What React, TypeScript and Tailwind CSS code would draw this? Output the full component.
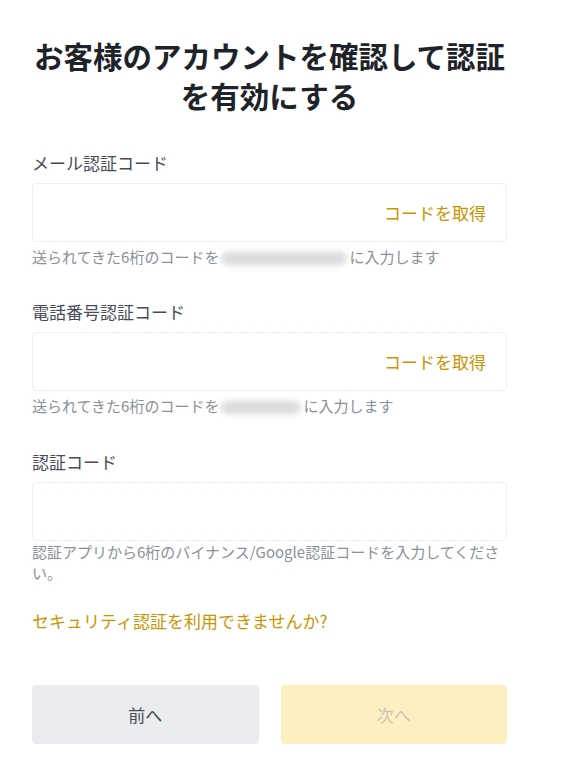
import React from "react";

const font = { fontFamily: '"Noto Sans CJK JP", "Noto Sans", sans-serif' };

function Blur({ w }: { w: number }) {
  return (
    <span
      className="inline-block h-[13px] align-middle rounded-full bg-[#d9dadc] blur-[3px] mx-[2px]"
      style={{ width: w }}
    />
  );
}

function Field({
  label,
  action,
  helper,
  helperGap,
}: {
  label: string;
  action?: boolean;
  helper: React.ReactNode;
  helperGap: string;
}) {
  return (
    <div className="flex flex-col">
      <div className="text-[17px] leading-[24px] text-[#474d57]">{label}</div>
      <div className="mt-[8px] h-[59px] rounded-[4px] border border-[#eeeff1] flex items-center justify-end pr-[20px]">
        {action && (
          <span className="text-[17px] text-[#c99400]">コードを取得</span>
        )}
      </div>
      <div className={`${helperGap} text-[15px] leading-[21px] text-[#8a9099]`}>{helper}</div>
    </div>
  );
}

export default function App() {
  return (
    <div className="min-h-[768px] w-[568px] bg-white" style={font}>
      <div className="w-[475px] ml-[32px] pt-[35px] flex flex-col">
        <h1 className="text-center text-[29.5px] leading-[40px] font-bold text-[#1e2329] whitespace-nowrap">
          お客様のアカウントを確認して認証
          <br />
          を有効にする
        </h1>
        <div className="mt-[36px]">
          <Field
            label="メール認証コード"
            action
            helperGap="mt-[4px]"
            helper={
              <>
                送られてきた6桁のコードを
                <Blur w={126} />
                に入力します
              </>
            }
          />
        </div>
        <div className="mt-[33px]">
          <Field
            label="電話番号認証コード"
            action
            helperGap="mt-[4px]"
            helper={
              <>
                送られてきた6桁のコードを
                <Blur w={80} />
                に入力します
              </>
            }
          />
        </div>
        <div className="mt-[34px]">
          <Field
            label="認証コード"
            helperGap="mt-0"
            helper={
              <>
                認証アプリから6桁のバイナンス/Google認証コードを入力してくださ
                <br />
                い。
              </>
            }
          />
        </div>
        <div className="mt-[26px] text-[17px] leading-[24px] text-[#c99400]">
          セキュリティ認証を利用できませんか?
        </div>
        <div className="mt-[52px] grid grid-cols-2 gap-[22px]">
          <button className="h-[59px] rounded-[4px] bg-[#eaecef] text-[17px] text-[#474d57]">
            前へ
          </button>
          <button className="h-[59px] rounded-[4px] bg-[#fcf0c0] text-[17px] text-[#c9c6bd]">
            次へ
          </button>
        </div>
      </div>
    </div>
  );
}
